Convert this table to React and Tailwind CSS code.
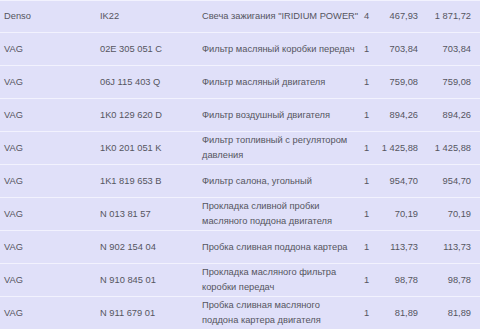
const ROWS = [
  { brand: 'Denso', code: 'IK22', name: ['Свеча зажигания "IRIDIUM POWER"'], qty: '4', price: '467,93', total: '1 871,72' },
  { brand: 'VAG', code: '02E 305 051 C', name: ['Фильтр масляный коробки передач'], qty: '1', price: '703,84', total: '703,84' },
  { brand: 'VAG', code: '06J 115 403 Q', name: ['Фильтр масляный двигателя'], qty: '1', price: '759,08', total: '759,08' },
  { brand: 'VAG', code: '1K0 129 620 D', name: ['Фильтр воздушный двигателя'], qty: '1', price: '894,26', total: '894,26' },
  { brand: 'VAG', code: '1K0 201 051 K', name: ['Фильтр топливный с регулятором', 'давления'], qty: '1', price: '1 425,88', total: '1 425,88' },
  { brand: 'VAG', code: '1K1 819 653 B', name: ['Фильтр салона, угольный'], qty: '1', price: '954,70', total: '954,70' },
  { brand: 'VAG', code: 'N 013 81 57', name: ['Прокладка сливной пробки', 'масляного поддона двигателя'], qty: '1', price: '70,19', total: '70,19' },
  { brand: 'VAG', code: 'N 902 154 04', name: ['Пробка сливная поддона картера'], qty: '1', price: '113,73', total: '113,73' },
  { brand: 'VAG', code: 'N 910 845 01', name: ['Прокладка масляного фильтра', 'коробки передач'], qty: '1', price: '98,78', total: '98,78' },
  { brand: 'VAG', code: 'N 911 679 01', name: ['Пробка сливная масляного', 'поддона картера двигателя'], qty: '1', price: '81,89', total: '81,89' },
];

export default function App() {
  return (
    <div
      className="w-[480px] h-[329px] overflow-hidden bg-[#e0e0f9] text-[#555560] text-[9.3px] leading-[15px]"
      style={{ fontFamily: '"Liberation Sans", Arial, sans-serif' }}
    >
      {ROWS.map((r, i) => (
        <div
          key={r.code}
          className={`flex items-center h-[33px] border-b border-[#f2f2fe] ${i === 0 ? 'border-t' : ''}`}
        >
          <div className="w-[96px] shrink-0 pl-[4px] whitespace-nowrap">{r.brand}</div>
          <div className="w-[102px] shrink-0 pl-[4px] whitespace-nowrap">{r.code}</div>
          <div className="w-[162px] shrink-0 pl-[4px] whitespace-nowrap">
            {r.name.map((line) => (
              <div key={line}>{line}</div>
            ))}
          </div>
          <div className="w-[18px] shrink-0 pl-[4px]">{r.qty}</div>
          <div className="w-[42px] shrink-0 pr-[2px] text-right whitespace-nowrap">{r.price}</div>
          <div className="w-[55px] shrink-0 pr-[4px] text-right whitespace-nowrap">{r.total}</div>
        </div>
      ))}
    </div>
  );
}
